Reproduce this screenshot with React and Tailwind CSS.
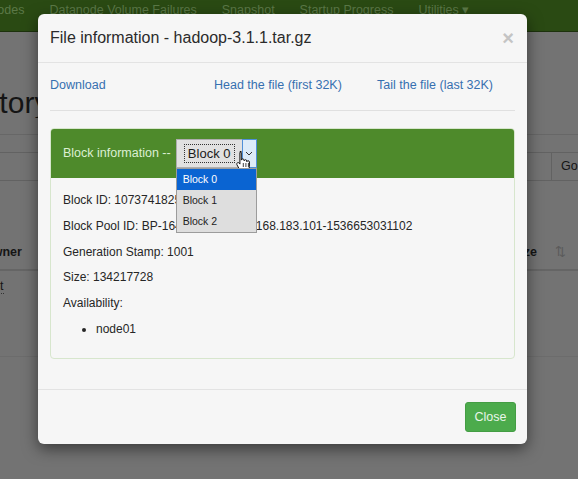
import React from 'react';

// ─── Hand cursor (drawn over the select) ─────────────────────────────────────

function HandCursor({ className = '' }) {
  return (
    <svg viewBox="0 0 16 22" className={className} aria-hidden="true">
      <path
        d="M4.5 1.5c.8 0 1.4.6 1.4 1.4v7.2c.2-.8.8-1.2 1.5-1.2.8 0 1.3.6 1.3 1.3v.6c.2-.7.8-1.1 1.4-1.1.8 0 1.3.6 1.3 1.3v.7c.2-.6.7-1 1.3-1 .8 0 1.3.6 1.3 1.3v4.6c0 2.8-1.8 5-4.8 5H7.6c-1.6 0-2.6-.8-3.4-2L1.6 14.9c-.5-.8-.3-1.7.4-2.1.7-.4 1.5-.2 2 .5l.5.8V2.9c0-.8.6-1.4 1.4-1.4z"
        fill="#fff"
        stroke="#111"
        strokeWidth="1"
        strokeLinejoin="round"
        transform="translate(-0.6 0)"
      />
      <path d="M7.3 13v4M9.9 13v4M12.4 13v4" stroke="#111" strokeWidth="0.8" />
    </svg>
  );
}

// ─── Select with open list ───────────────────────────────────────────────────

function BlockSelect() {
  const options = ['Block 0', 'Block 1', 'Block 2'];
  return (
    <div className="relative">
      <div className="flex h-[29px] w-[81px] border border-[#adadad] bg-[#e1e1e1]">
        <div className="flex flex-1 items-center justify-center">
          <span className="border border-dotted border-[#333] px-[3px] text-[13px] leading-[17px] text-[#1a1a1a]">
            Block 0
          </span>
        </div>
        <div className="-my-px -mr-px flex w-[15px] items-center justify-center border border-[#4f8fd8] bg-[#dcebf9]">
          <svg viewBox="0 0 8 5" className="h-[5px] w-[8px]" aria-hidden="true">
            <path d="M1 1l3 3 3-3" fill="none" stroke="#333" strokeWidth="1" />
          </svg>
        </div>
      </div>
      <HandCursor className="absolute left-[60px] top-[11px] h-[22px] w-[16px]" />

      {/* open option list */}
      <ul className="absolute left-0 top-[29px] w-[81px] border border-[#9c9c9c] bg-[#dedede]">
        {options.map((o, i) => (
          <li
            key={o}
            className={[
              'flex h-[21px] items-center pl-[6px] text-[10.5px]',
              i === 0 ? 'bg-[#0a64d2] text-white' : 'text-[#222]',
            ].join(' ')}
          >
            {o}
          </li>
        ))}
      </ul>
    </div>
  );
}

// ─── Page behind the modal (already dimmed) ──────────────────────────────────

function DimmedPage() {
  return (
    <div className="flex h-full flex-col bg-[#737373] text-[#151515]">
      <nav className="flex h-[32px] items-start gap-[25px] overflow-hidden border-b border-[#1d320d] bg-[#2a4a13] text-[12.5px] leading-[21px] text-[#5b7847]">
        <span className="-ml-[36px]">Datanodes</span>
        <span>Datanode Volume Failures</span>
        <span>Snapshot</span>
        <span>Startup Progress</span>
        <span>Utilities ▾</span>
      </nav>

      <div className="overflow-hidden pt-[56px]">
        <h1 className="-ml-[179px] whitespace-nowrap text-[30px] leading-none">Browse Directory</h1>
      </div>

      <div className="mt-[16px] h-[18px] border-t border-[#676767]" />

      <div className="flex h-[29px] border-y border-[#626262]">
        <div className="flex-1" />
        <div className="flex w-[27px] items-center border-l border-[#626262] pl-[9px] text-[12.5px]">Go!</div>
      </div>

      <div className="mt-[62px] flex items-center justify-between pr-[12px] text-[12.5px] font-bold">
        <span className="-ml-[17px]">Owner</span>
        <span className="flex items-center gap-[18px]">
          <span>Size</span>
          <span className="font-normal text-[#5a5a5a]">⇅</span>
        </span>
      </div>
      <div className="mt-[7px] border-t-2 border-[#656565]" />
      <div className="pt-[6px] text-[12.5px]">
        <span className="-ml-[18px] border-b border-dotted border-[#333]">root</span>
      </div>
      <div className="mt-[60px] border-t border-[#6c6c6c]" />
    </div>
  );
}

// ─── Modal ───────────────────────────────────────────────────────────────────

export default function App() {
  return (
    <div className="relative h-[479px] w-[578px] overflow-hidden font-['Liberation_Sans',Arial,sans-serif]">
      <DimmedPage />

      <div className="absolute left-[38px] top-[14px] flex w-[489px] flex-col rounded-[6px] bg-[#f6f6f6] shadow-[0_5px_15px_rgba(0,0,0,0.5)]">
        {/* header */}
        <div className="flex h-[49px] items-center justify-between border-b border-[#e3e3e3] px-[12px]">
          <h4 className="text-[16px] text-[#2b2b2b]">File information - hadoop-3.1.1.tar.gz</h4>
          <span className="mr-[1px] text-[20px] font-bold leading-none text-[#c4c4c4]">×</span>
        </div>

        {/* body */}
        <div className="px-[12px] pb-[13px] pt-[14px]">
          <div className="grid grid-cols-[164px_163px_1fr] text-[12.5px] leading-[17px] text-[#3670b0]">
            <a>Download</a>
            <a>Head the file (first 32K)</a>
            <a>Tail the file (last 32K)</a>
          </div>

          <hr className="mb-[17px] mt-[16px] border-[#e0e0e0]" />

          <div className="mb-[17px] rounded-[4px] border border-[#d7e6cd]">
            <div className="flex h-[49px] items-center gap-[5px] rounded-t-[3px] bg-[#4e8a2b] px-[12px] text-[12.5px] text-[#dcefd3]">
              <span>Block information --</span>
              <BlockSelect />
            </div>
            <div className="px-[12px] pb-[12px] pt-[14px] text-[12px] leading-[17px] text-[#262626]">
              <p className="mb-[8.8px]">Block ID: 1073741825</p>
              <p className="mb-[8.8px]">Block Pool ID: BP-1645362150-192.168.183.101-1536653031102</p>
              <p className="mb-[8.8px]">Generation Stamp: 1001</p>
              <p className="mb-[8.8px]">Size: 134217728</p>
              <p className="mb-[8.8px]">Availability:</p>
              <ul className="mb-[8px] list-disc pl-[33px]">
                <li>node01</li>
              </ul>
            </div>
          </div>
        </div>

        {/* footer */}
        <div className="flex justify-end border-t border-[#e3e3e3] px-[11px] pb-[12px] pt-[12px]">
          <button
            type="button"
            className="h-[30px] w-[51px] rounded-[3px] border border-[#449d44] bg-[#4cab4c] text-[12.5px] text-[#e9f6e9]"
          >
            Close
          </button>
        </div>
      </div>
    </div>
  );
}
